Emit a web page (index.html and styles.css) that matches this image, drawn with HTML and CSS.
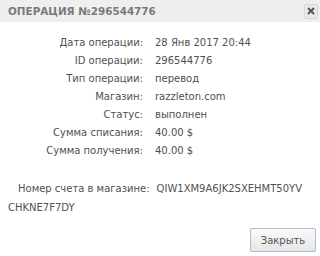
FILE: index.html
```html
<!DOCTYPE html>
<html lang="ru">
<head>
  <meta charset="UTF-8" />
  <title>Операция №296544776</title>
  <link rel="stylesheet" href="styles.css">
</head>
<body>
<div class="dialog">
  <div class="dialog-head">
    <span class="dialog-title">Операция №296544776</span>
    <button class="close-btn" title="Закрыть">
      <svg width="8" height="8" viewBox="0 0 8 8"><path d="M1 1L7 7M7 1L1 7" stroke="#555" stroke-width="2"/></svg>
    </button>
  </div>

  <table class="details">
    <tr><td class="label">Дата операции:</td><td>28 Янв 2017 20:44</td></tr>
    <tr><td class="label">ID операции:</td><td>296544776</td></tr>
    <tr><td class="label">Тип операции:</td><td>перевод</td></tr>
    <tr><td class="label">Магазин:</td><td>razzleton.com</td></tr>
    <tr><td class="label">Статус:</td><td>выполнен</td></tr>
    <tr><td class="label">Сумма списания:</td><td>40.00 $</td></tr>
    <tr><td class="label">Сумма получения:</td><td>40.00 $</td></tr>
  </table>

  <p class="invoice">Номер счета в магазине:<span class="invoice-no">QIW1XM9A6JK2SXEHMT50YV<wbr>CHKNE7F7DY</span></p>

  <div class="dialog-foot">
    <button class="btn">Закрыть</button>
  </div>
</div>
</body>
</html>
```

FILE: styles.css
```css
body {
  margin: 0;
  background: #fff;
  font-family: 'DejaVu Sans', sans-serif;
  font-size: 10px;
  color: #505050;
}

.dialog {
  width: 320px;
  height: 256px;
  display: flex;
  flex-direction: column;
}

.dialog-head {
  height: 22px;
  background: #efefef;
  display: flex;
  align-items: center;
  justify-content: space-between;
  padding: 0 2px 0 8px;
}

.dialog-title {
  text-transform: uppercase;
  font-weight: bold;
  font-size: 10.4px;
  color: #7a7a7a;
}

.close-btn {
  width: 14px;
  height: 15px;
  padding: 0;
  border: 1px solid #d8d8d8;
  border-radius: 2px;
  background: #e9e9e9;
  display: flex;
  align-items: center;
  justify-content: center;
}

.details {
  border-collapse: collapse;
  margin-top: 11px;
}

.details td {
  height: 18px;
  padding: 0;
  white-space: nowrap;
}

.details .label {
  width: 143px;
  text-align: right;
  padding-right: 12px;
}

.invoice {
  margin: 20px 0 0;
  padding: 0 4px 0 8px;
  text-indent: 10px;
  line-height: 19px;
}

.invoice-no {
  margin-left: 7px;
}

.dialog-foot {
  margin-top: auto;
  display: flex;
  justify-content: flex-end;
  padding: 0 4px 4px 0;
}

.btn {
  width: 66px;
  height: 24px;
  font-family: inherit;
  font-size: 10px;
  color: #555;
  border: 1px solid #a9bcd3;
  border-radius: 2px;
  background: linear-gradient(#fafafa, #e6e6e6);
}
```
